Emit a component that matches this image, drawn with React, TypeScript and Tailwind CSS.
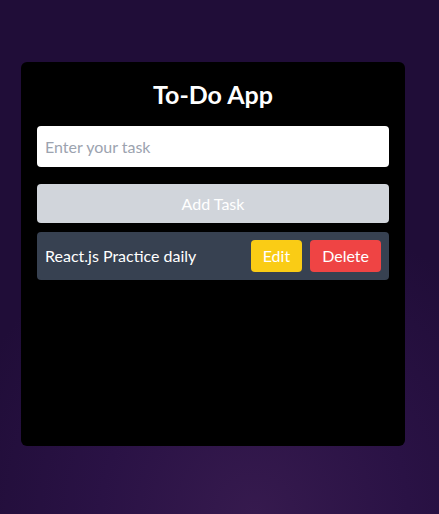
export default function App() {
  const tasks = ['React.js Practice daily'];

  return (
    <div
      className="min-h-screen bg-[radial-gradient(ellipse_70%_60%_at_58%_100%,#361a4e_0%,#2a1245_50%,#200d38_100%)] pt-[62px] pl-[21px]"
      style={{ fontFamily: 'Lato, "Open Sans", sans-serif' }}
    >
      <div className="w-96 h-[384px] bg-black rounded-md p-4">
        <h1 className="text-[25px] leading-8 font-bold text-white text-center mb-4">
          To-Do App
        </h1>

        <input
          placeholder="Enter your task"
          className="w-full h-[41px] bg-white rounded px-2 text-base text-gray-900 placeholder:text-[#9ca3af] outline-none mb-[17px]"
        />

        <button className="w-full h-[39px] bg-[#d1d5db] text-white rounded text-base mb-[9px]">
          Add Task
        </button>

        {tasks.map((task) => (
          <div
            key={task}
            className="flex items-center justify-between bg-[#374151] rounded p-2 h-12"
          >
            <span className="text-white text-base">{task}</span>
            <div className="flex items-center gap-2">
              <button className="bg-[#facc15] text-white rounded px-3 h-8 text-base">
                Edit
              </button>
              <button className="bg-[#ef4444] text-white rounded px-3 h-8 text-base">
                Delete
              </button>
            </div>
          </div>
        ))}
      </div>
    </div>
  );
}
